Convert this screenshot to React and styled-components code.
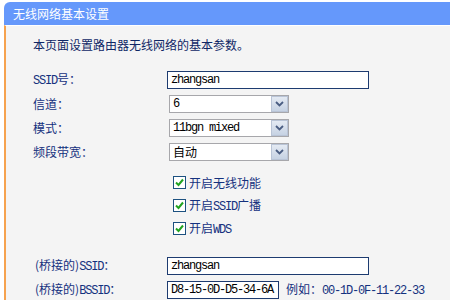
import React from "react";
import styled, { createGlobalStyle } from "styled-components";

const GlobalStyle = createGlobalStyle`
  html, body { margin: 0; padding: 0; background: #ffffff; }
  body { font-family: "Noto Sans CJK SC", sans-serif; font-size: 12px; }
`;

const Page = styled.div`
  padding: 2px 0 0 4px;
  width: 446px;
  height: 298px;
  overflow: hidden;
`;

const Header = styled.div`
  height: 23px;
  line-height: 23px;
  background: #6598fb;
  color: #ffffff;
  border-top-left-radius: 6px;
  padding-left: 9px;
  font-size: 12px;
`;

const Body = styled.div`
  border-top: 1px solid #ffffff;
  border-left: 2px solid #f6a24e;
  background: #f4f4f4;
  padding: 9px 0 40px 27px;
  color: #14317e;
`;

const Desc = styled.div`
  height: 20px;
  line-height: 20px;
  color: #0f2766;
`;

const Section = styled.div`
  margin-top: ${(p) => p.$gap}px;
  padding-left: ${(p) => p.$indent || 0}px;
`;

const Row = styled.div`
  display: grid;
  grid-template-columns: ${(p) => 134 - (p.$indent || 0)}px auto;
  align-items: center;
  height: ${(p) => p.$h || 24}px;
`;

const Label = styled.div`
  line-height: 16px;
  white-space: nowrap;
`;

const Lat = styled.span`
  font-family: "Liberation Mono", monospace;
  font-size: 12px;
  letter-spacing: -1.2px;
`;

const Controls = styled.div`
  display: flex;
  align-items: center;
  gap: 7px;
`;

const TextBox = styled.div`
  box-sizing: border-box;
  width: ${(p) => p.$w}px;
  height: 18px;
  border: 1px solid #1d3b70;
  background: #ffffff;
  padding-left: 3px;
  display: flex;
  align-items: center;
  color: #000000;
`;

const SelectBox = styled.div`
  box-sizing: border-box;
  width: 120px;
  height: 18px;
  border: 1px solid #a7a7ab;
  background: #ffffff;
  display: flex;
  align-items: stretch;
  color: #000000;
  margin-left: 2px;
`;

const SelectValue = styled.div`
  flex: 1;
  display: flex;
  align-items: center;
  padding-left: 3px;
  line-height: 16px;
`;

const ArrowBtn = styled.div`
  box-sizing: border-box;
  width: 17px;
  border: 1px solid #b9c4d6;
  background: linear-gradient(#e4eaf3, #c6d2e3);
  display: flex;
  align-items: center;
  justify-content: center;
`;

const CheckBox = styled.div`
  box-sizing: border-box;
  width: 13px;
  height: 13px;
  border: 1px solid #1c5180;
  background: #ffffff;
  display: flex;
  align-items: center;
  justify-content: center;
`;

const CheckWrap = styled.div`
  display: flex;
  align-items: center;
  gap: 3px;
  margin-left: 6px;
  line-height: 16px;
`;

const Example = styled.div`
  line-height: 16px;
  white-space: nowrap;
`;

const Chevron = () => (
  <svg width="9" height="6" viewBox="0 0 9 6">
    <path d="M1 1 L4.5 4.5 L8 1" fill="none" stroke="#4a5d82" strokeWidth="1.8" />
  </svg>
);

const Check = () => (
  <svg width="9" height="9" viewBox="0 0 9 9">
    <path d="M1 4.5 L3.5 7 L8 1.5" fill="none" stroke="#21a321" strokeWidth="2" />
  </svg>
);

const Select = ({ children }) => (
  <SelectBox>
    <SelectValue>{children}</SelectValue>
    <ArrowBtn>
      <Chevron />
    </ArrowBtn>
  </SelectBox>
);

const CheckRow = ({ children }) => (
  <Row $h={23}>
    <span />
    <CheckWrap>
      <CheckBox>
        <Check />
      </CheckBox>
      <Label>{children}</Label>
    </CheckWrap>
  </Row>
);

export default function App() {
  return (
    <>
      <GlobalStyle />
      <Page>
        <Header>无线网络基本设置</Header>
        <Body>
          <Desc>本页面设置路由器无线网络的基本参数。</Desc>
          <Section $gap={13}>
            <Row>
              <Label>
                <Lat>SSID</Lat>号：
              </Label>
              <TextBox $w={202}>
                <Lat>zhangsan</Lat>
              </TextBox>
            </Row>
            <Row>
              <Label>信道：</Label>
              <Select>
                <Lat>6</Lat>
              </Select>
            </Row>
            <Row>
              <Label>模式：</Label>
              <Select>
                <Lat>11bgn mixed</Lat>
              </Select>
            </Row>
            <Row>
              <Label>频段带宽：</Label>
              <Select>自动</Select>
            </Row>
          </Section>
          <Section $gap={7}>
            <CheckRow>开启无线功能</CheckRow>
            <CheckRow>
              开启<Lat>SSID</Lat>广播
            </CheckRow>
            <CheckRow>
              开启<Lat>WDS</Lat>
            </CheckRow>
          </Section>
          <Section $gap={14} $indent={2}>
            <Row $indent={2}>
              <Label>
                (桥接的)<Lat>SSID</Lat>：
              </Label>
              <TextBox $w={202}>
                <Lat>zhangsan</Lat>
              </TextBox>
            </Row>
            <Row $indent={2}>
              <Label>
                (桥接的)<Lat>BSSID</Lat>：
              </Label>
              <Controls>
                <TextBox $w={112}>
                  <Lat>D8-15-0D-D5-34-6A</Lat>
                </TextBox>
                <Example>
                  例如：<Lat>00-1D-0F-11-22-33</Lat>
                </Example>
              </Controls>
            </Row>
          </Section>
        </Body>
      </Page>
    </>
  );
}
